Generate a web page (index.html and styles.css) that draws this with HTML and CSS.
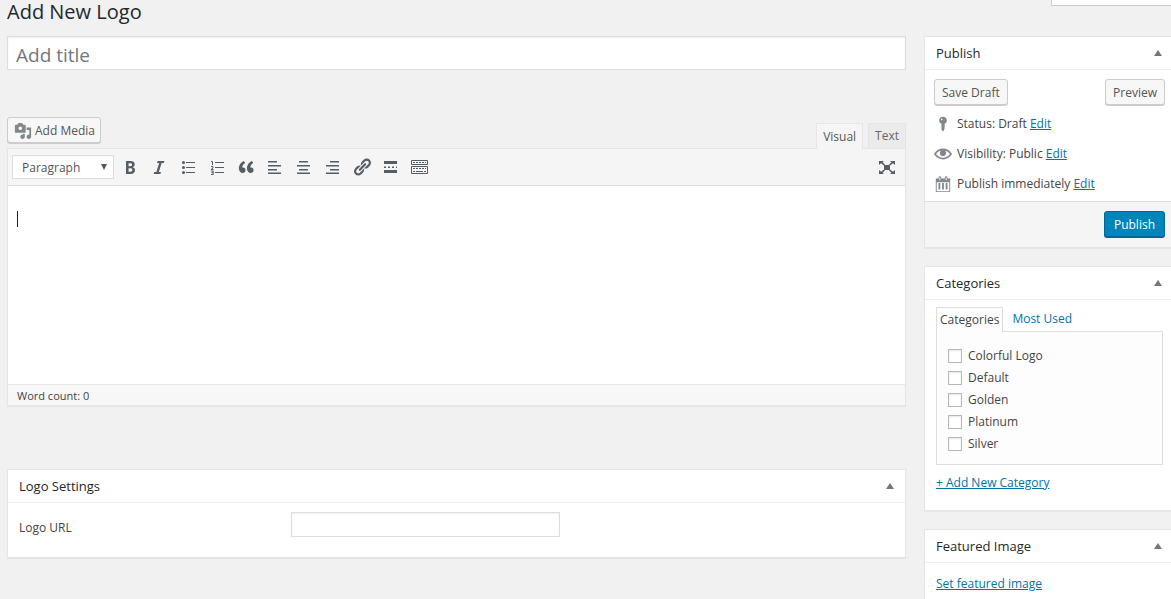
FILE: index.html
```html
<!DOCTYPE html>
<html lang="en">
<head>
<meta charset="UTF-8">
<meta name="viewport" content="width=device-width, initial-scale=1.0">
<title>Add New Logo</title>
<link rel="stylesheet" href="styles.css">
</head>
<body>

<header class="page-header">
  <h1>Add New Logo</h1>
  <div class="screen-tab"></div>
</header>

<div class="columns">
  <main>
    <input type="text" class="title-input" placeholder="Add title" aria-label="Add title">

    <div class="editor-tools">
      <button type="button" class="button media-button">
        <svg width="18" height="18" viewBox="0 0 20 20"><path d="M13 11V4c0-.55-.45-1-1-1h-1.670L9 1H5L3.670 3H2c-.55 0-1 .45-1 1v7c0 .55.45 1 1 1h10c.55 0 1-.45 1-1zM7 5c1.100 0 2 .9 2 2s-.9 2-2 2-2-.9-2-2 .9-2 2-2zM14 6h5v10.500c0 1.380-1.120 2.500-2.500 2.500S14 17.880 14 16.500s1.120-2.500 2.500-2.500c.17 0 .34.02.5.05V9h-3V6zm-4 8.050V13h2v3.500c0 1.380-1.120 2.500-2.500 2.500S7 17.880 7 16.500 8.120 14 9.500 14c.17 0 .34.02.5.05z"/></svg>
        Add Media
      </button>
      <div class="editor-tabs">
        <button type="button" class="active">Visual</button>
        <button type="button">Text</button>
      </div>
    </div>

    <div class="editor">
      <div class="toolbar">
        <div class="format">
          <select aria-label="Format">
            <option>Paragraph</option>
            <option>Heading 1</option>
            <option>Heading 2</option>
            <option>Preformatted</option>
          </select>
          <svg width="8" height="6" viewBox="0 0 8 6"><path d="M1 0h6L4 6z"/></svg>
        </div>
        <button type="button" aria-label="Bold"><svg viewBox="0 0 20 20"><path d="M6 4v13h4.540c1.370 0 2.460-.33 3.260-1 .8-.66 1.200-1.580 1.200-2.770 0-.84-.17-1.510-.51-2.010s-.9-.85-1.670-1.030v-.09c.57-.1 1.020-.4 1.360-.9s.51-1.130.51-1.910c0-1.140-.39-1.980-1.170-2.500C12.750 4.260 11.500 4 9.780 4H6zm2.570 5.150V6.260h1.360c.73 0 1.270.11 1.610.32.34.22.51.58.51 1.070 0 .54-.16.92-.47 1.150s-.82.35-1.510.35h-1.500zm0 2.190h1.600c1.440 0 2.160.53 2.160 1.610 0 .6-.17 1.050-.51 1.340s-.86.43-1.570.43H8.570v-3.380z"/></svg></button>
        <button type="button" aria-label="Italic"><svg viewBox="0 0 20 20"><path d="M14.780 6h-2.130l-2.800 9h2.120l-.62 2H4.600l.62-2h2.140l2.800-9H8.030l.62-2h6.750z"/></svg></button>
        <button type="button" aria-label="Bulleted list"><svg viewBox="0 0 20 20"><circle cx="5.500" cy="5.500" r="1.500"/><circle cx="5.500" cy="10.500" r="1.500"/><circle cx="5.500" cy="15.500" r="1.500"/><path d="M8 5h9v1H8zM8 10h9v1H8zM8 15h9v1H8z"/></svg></button>
        <button type="button" aria-label="Numbered list"><svg viewBox="0 0 20 20"><path d="M8 5h9v1H8zM8 10h9v1H8zM8 15h9v1H8z"/><path class="line" d="M4 4.500h1.500V8M4 9.500h2v1.500l-2 1.500h2.500M4 14h2.200v3.500H4M4.500 15.700H6"/></svg></button>
        <button type="button" aria-label="Blockquote"><svg viewBox="0 0 20 20"><path d="M9.490 13.220c0-.74-.2-1.380-.61-1.900-.62-.78-1.830-.88-2.530-.72-.29-1.650 1.110-3.750 2.920-4.650L7.880 4c-2.730 1.300-5.420 4.280-4.960 8.050C3.210 14.430 4.590 16 6.540 16c.85 0 1.560-.25 2.120-.75s.83-1.180.83-2.030zm8.050 0c0-.74-.2-1.380-.61-1.900-.63-.78-1.830-.88-2.530-.72-.29-1.650 1.110-3.750 2.920-4.650L15.930 4c-2.730 1.300-5.410 4.280-4.950 8.050.29 2.380 1.660 3.950 3.610 3.950.85 0 1.560-.25 2.120-.75s.83-1.180.83-2.030z"/></svg></button>
        <button type="button" aria-label="Align left"><svg viewBox="0 0 20 20"><path d="M3 4h9v1.500H3zM3 8h13v1.500H3zM3 12h9v1.500H3zM3 15.500h13V17H3z"/></svg></button>
        <button type="button" aria-label="Align center"><svg viewBox="0 0 20 20"><path d="M5 4h9v1.500H5zM3 8h13v1.500H3zM5 12h9v1.500H5zM3 15.500h13V17H3z"/></svg></button>
        <button type="button" aria-label="Align right"><svg viewBox="0 0 20 20"><path d="M7 4h9v1.500H7zM3 8h13v1.500H3zM7 12h9v1.500H7zM3 15.500h13V17H3z"/></svg></button>
        <button type="button" aria-label="Insert link"><svg viewBox="0 0 20 20"><path d="M17.740 2.760c1.680 1.690 1.680 4.410 0 6.100l-1.530 1.520c-1.120 1.120-2.700 1.470-4.140 1.090l2.620-2.610.76-.77.76-.76c.84-.84.84-2.200 0-3.040-.84-.85-2.200-.85-3.040 0l-.77.76-3.380 3.380c-.37-1.440-.02-3.020 1.100-4.140l1.520-1.530c1.690-1.680 4.420-1.680 6.100 0zM8.590 13.430l5.340-5.340c.42-.42.42-1.100 0-1.520-.44-.43-1.130-.39-1.530 0l-5.330 5.340c-.42.42-.42 1.100 0 1.520.44.43 1.130.39 1.520 0zm-.76 2.290l4.140-4.150c.38 1.440.03 3.020-1.090 4.140l-1.520 1.530c-1.690 1.680-4.410 1.680-6.100 0-1.680-1.680-1.680-4.420 0-6.100l1.530-1.520c1.120-1.120 2.700-1.470 4.140-1.100l-4.140 4.150c-.85.84-.85 2.200 0 3.050.84.84 2.200.84 3.040 0z"/></svg></button>
        <button type="button" aria-label="Insert Read More tag"><svg viewBox="0 0 20 20"><path d="M16 7V4H3v3h13zM5 11V9.500H3V11h2zm4 0V9.500H7V11h2zm4 0V9.500h-2V11h2zm3 0V9.500h-1V11h1zm0 5v-3H3v3h13z"/></svg></button>
        <button type="button" aria-label="Toolbar toggle"><svg viewBox="0 0 20 20"><path class="line" d="M1.500 3.500h16v4h-16zM1.500 9.500h16v7h-16z"/><path class="line dashed" d="M3 5.500h13M3 11.500h13"/><path class="line" d="M3 14.500h2M6 14.500h7M14 14.500h2"/></svg></button>
        <button type="button" class="fullscreen" aria-label="Distraction-free writing"><svg viewBox="0 0 20 20"><path d="M7 8h6v5H7zM2 4h5L5.500 5.200 8 7.500 7 8.500 4 6.200 2 8zM18 4h-5l1.500 1.200L12 7.500l1 1 3-2.300L18 8zM2 17h5l-1.500-1.200L8 13.500l-1-1-3 2.300L2 13zM18 17h-5l1.500-1.200-2.500-2.300 1-1 3 2.300 2-1.800z"/></svg></button>
      </div>
      <div class="content">
        <textarea aria-label="Content"></textarea>
        <span class="caret"></span>
      </div>
      <div class="status-bar">Word count: 0</div>
    </div>

    <section class="panel settings">
      <h2>Logo Settings <button type="button" class="toggle" aria-label="Toggle panel"></button></h2>
      <div class="settings-row">
        <label for="logoUrl">Logo URL</label>
        <input type="text" id="logoUrl">
      </div>
    </section>
  </main>

  <aside>
    <section class="panel">
      <h2>Publish <button type="button" class="toggle" aria-label="Toggle panel"></button></h2>
      <div class="publish-body">
        <div class="actions">
          <button type="button" class="button">Save Draft</button>
          <button type="button" class="button">Preview</button>
        </div>
        <p>
          <svg width="18" height="18" viewBox="0 0 20 20"><path fill-rule="evenodd" d="M10 2c2.500 0 4.300 1.800 4.300 4 0 1.700-1 3-2.500 3.700V15l-1.500 3h-.8l-1.200-2V9.700C6.800 9 5.700 7.700 5.700 6c0-2.200 1.800-4 4.300-4zM8.600 3.800L7.500 5l1 1 1.300-1.200z"/></svg>
          <span>Status: <b>Draft</b> <a href="#">Edit</a></span>
        </p>
        <p>
          <svg width="18" height="18" viewBox="0 0 20 20"><path d="M19.700 9.400C17.700 6 14 3.900 10 3.900S2.300 6 .3 9.400L0 10l.3.6c2 3.400 5.700 5.500 9.700 5.500s7.700-2.100 9.700-5.500l.3-.6-.3-.6zM10 14.100c-3.100 0-6-1.600-7.700-4.100C3.600 8 5.700 6.600 8 6.100c-.9.6-1.500 1.700-1.500 2.900 0 1.900 1.600 3.500 3.500 3.500s3.500-1.600 3.500-3.500c0-1.200-.6-2.300-1.500-2.900 2.300.5 4.400 1.900 5.700 3.900-1.700 2.500-4.600 4.100-7.700 4.100z"/></svg>
          <span>Visibility: <b>Public</b> <a href="#">Edit</a></span>
        </p>
        <p>
          <svg width="18" height="18" viewBox="0 0 20 20"><path d="M15 4h3v15H2V4h3V3c0-.83.67-1.500 1.500-1.500S8 2.170 8 3v1h4V3c0-.83.67-1.500 1.500-1.500S15 2.170 15 3v1zM6 3v2.500c0 .28.22.5.5.5s.5-.22.5-.5V3c0-.28-.22-.5-.5-.5S6 2.720 6 3zm7 0v2.500c0 .28.22.5.5.5s.5-.22.5-.5V3c0-.28-.22-.5-.5-.5s-.5.22-.5.5zm4 15V8H3v10h14zM7 9v7H5V9h2zm4 0v7H9V9h2zm4 0v7h-2V9h2z"/></svg>
          <span>Publish <b>immediately</b> <a href="#">Edit</a></span>
        </p>
      </div>
      <div class="publish-footer">
        <button type="button" class="button primary">Publish</button>
      </div>
    </section>

    <section class="panel">
      <h2>Categories <button type="button" class="toggle" aria-label="Toggle panel"></button></h2>
      <div class="categories">
        <div class="category-tabs">
          <button type="button" class="active">Categories</button>
          <a href="#">Most Used</a>
        </div>
        <div class="category-list">
          <label><input type="checkbox"> Colorful Logo</label>
          <label><input type="checkbox"> Default</label>
          <label><input type="checkbox"> Golden</label>
          <label><input type="checkbox"> Platinum</label>
          <label><input type="checkbox"> Silver</label>
        </div>
        <a href="#">+ Add New Category</a>
      </div>
    </section>

    <section class="panel last">
      <h2>Featured Image <button type="button" class="toggle" aria-label="Toggle panel"></button></h2>
      <div class="featured">
        <a href="#">Set featured image</a>
      </div>
    </section>
  </aside>
</div>

</body>
</html>
```
FILE: styles.css
```css
* {
  box-sizing: border-box;
}
body {
  margin: 0;
  padding-left: 7px;
  min-height: 100vh;
  display: flex;
  flex-direction: column;
  background-color: #f1f1f1;
  color: #444;
  font-family: "Open Sans", "Noto Sans", sans-serif;
  font-size: 12px;
  line-height: 18px;
}
button, input, select, textarea {
  font: inherit;
  color: inherit;
  margin: 0;
}
button {
  cursor: pointer;
}
svg {
  display: block;
  fill: #82878c;
}
a {
  color: #0073aa;
}

.page-header {
  display: flex;
  justify-content: space-between;
  height: 36px;
}
h1 {
  margin: 0;
  color: #23282d;
  font-size: 20px;
  font-weight: 400;
  line-height: 24px;
}
.screen-tab {
  width: 120px;
  height: 6px;
  background-color: #fff;
  border: 1px solid #ccc;
  border-top: 0;
  border-right: 0;
}

.columns {
  flex: 1;
  display: grid;
  grid-template-columns: 1fr 247px;
  gap: 18px;
}
main {
  min-width: 0;
}
aside {
  display: flex;
  flex-direction: column;
  gap: 18px;
}

.title-input {
  display: block;
  width: 100%;
  height: 34px;
  padding: 4px 8px 0;
  border: 1px solid #ddd;
  background-color: #fff;
  box-shadow: inset 0 1px 2px rgba(0,0,0,0.07);
  font-size: 19px;
}
.title-input::placeholder {
  color: #72777c;
}

.button {
  height: 26px;
  padding: 2px 7px 0;
  border: 1px solid #ccc;
  border-radius: 3px;
  background-color: #f7f7f7;
  box-shadow: 0 1px 0 #ccc;
  color: #555;
}
.primary {
  padding: 2px 9px 0;
  border-color: #006799;
  background-color: #0085ba;
  box-shadow: 0 1px 0 #006799;
  color: #fff;
  font-weight: 500;
}

.editor-tools {
  display: flex;
  justify-content: space-between;
  margin-top: 47px;
  height: 31px;
}
.media-button {
  display: flex;
  align-items: center;
  gap: 3px;
  padding: 2px 5px 0 6px;
}
.editor-tabs {
  display: flex;
  align-items: flex-end;
  gap: 5px;
}
.editor-tabs button {
  height: 25px;
  padding: 0 6px;
  border: 1px solid #e5e5e5;
  border-bottom: 0;
  background-color: #ebebeb;
  color: #666;
}
.editor-tabs .active {
  height: 26px;
  margin-bottom: -1px;
  background-color: #f5f5f5;
  color: #555;
}

.editor {
  border: 1px solid #e5e5e5;
  box-shadow: 0 1px 1px rgba(0,0,0,0.04);
}
.toolbar {
  display: flex;
  align-items: center;
  gap: 3px;
  height: 37px;
  padding: 0 5px 0 4px;
  background-color: #f5f5f5;
  border-bottom: 1px solid #ddd;
}
.toolbar button {
  width: 26px;
  height: 26px;
  padding: 3px;
  border: 0;
  background: none;
}
.toolbar button svg {
  width: 20px;
  height: 20px;
  fill: #555d66;
}
.toolbar .line {
  fill: none;
  stroke: #555d66;
}
.toolbar .dashed {
  stroke-dasharray: 2 1;
}
.toolbar .fullscreen {
  margin-left: auto;
}
.format {
  position: relative;
}
.format select {
  display: block;
  width: 102px;
  height: 24px;
  padding: 2px 9px 0;
  border: 1px solid #ddd;
  border-radius: 0;
  background-color: #fff;
  box-shadow: inset 0 1px 1px -1px rgba(0,0,0,0.2);
  color: #555;
  appearance: none;
}
.format svg {
  position: absolute;
  top: 9px;
  right: 6px;
  fill: #555;
  pointer-events: none;
}
.content {
  position: relative;
}
.content textarea {
  display: block;
  width: 100%;
  height: 198px;
  padding: 24px 9px;
  border: 0;
  outline: 0;
  resize: none;
  background-color: #fff;
}
.caret {
  position: absolute;
  top: 25px;
  left: 9px;
  width: 1px;
  height: 16px;
  background-color: #222;
}
.status-bar {
  height: 21px;
  padding: 2px 9px;
  border-top: 1px solid #e5e5e5;
  background-color: #f7f7f7;
  font-size: 11px;
}

.panel {
  border: 1px solid #e5e5e5;
  background-color: #fff;
  box-shadow: 0 1px 1px rgba(0,0,0,0.04);
}
aside .panel {
  border-right: 0;
}
.panel h2 {
  display: flex;
  align-items: center;
  justify-content: space-between;
  height: 33px;
  margin: 0;
  padding: 0 11px;
  border-bottom: 1px solid #eee;
  color: #23282d;
  font-size: 13px;
  font-weight: 500;
}
aside .panel h2 {
  padding-right: 9px;
}
.toggle {
  width: 8px;
  height: 6px;
  padding: 0;
  border: 0;
  background-color: #72777c;
  clip-path: polygon(50% 0, 100% 100%, 0 100%);
}
.settings {
  margin-top: 63px;
}
.settings-row {
  display: grid;
  grid-template-columns: 272px 269px;
  padding: 9px 11px 20px;
}
.settings-row label {
  padding-top: 7px;
}
.settings-row input {
  height: 25px;
  padding: 0 5px;
  border: 1px solid #ddd;
  box-shadow: inset 0 1px 2px rgba(0,0,0,0.07);
}

.publish-body {
  padding: 9px 6px 2px 9px;
}
.actions {
  display: flex;
  justify-content: space-between;
  margin-bottom: 4px;
}
.publish-body p {
  display: flex;
  align-items: center;
  gap: 5px;
  height: 30px;
  margin: 0;
}
.publish-body b {
  font-weight: 500;
}
.publish-footer {
  display: flex;
  justify-content: flex-end;
  padding: 9px 6px 10px;
  border-top: 1px solid #ddd;
  background-color: #f5f5f5;
}

.categories {
  padding: 7px 8px 18px 11px;
}
.category-tabs {
  display: flex;
  align-items: center;
  gap: 9px;
}
.category-tabs button {
  height: 25px;
  margin-bottom: -1px;
  padding: 0 3px;
  border: 1px solid #ddd;
  border-bottom: 0;
  background-color: #fdfdfd;
  position: relative;
}
.category-tabs a {
  text-decoration: none;
}
.category-list {
  margin-bottom: 9px;
  padding: 13px 11px 9px;
  border: 1px solid #ddd;
  background-color: #fdfdfd;
}
.category-list label {
  display: flex;
  align-items: center;
  gap: 6px;
  height: 22px;
}
.category-list input {
  width: 14px;
  height: 14px;
  border: 1px solid #b4b9be;
  background-color: #fff;
  box-shadow: inset 0 1px 2px rgba(0,0,0,0.1);
  appearance: none;
}
.last {
  flex: 1;
  border-bottom: 0;
}
.featured {
  padding: 12px 11px 0;
}
```
